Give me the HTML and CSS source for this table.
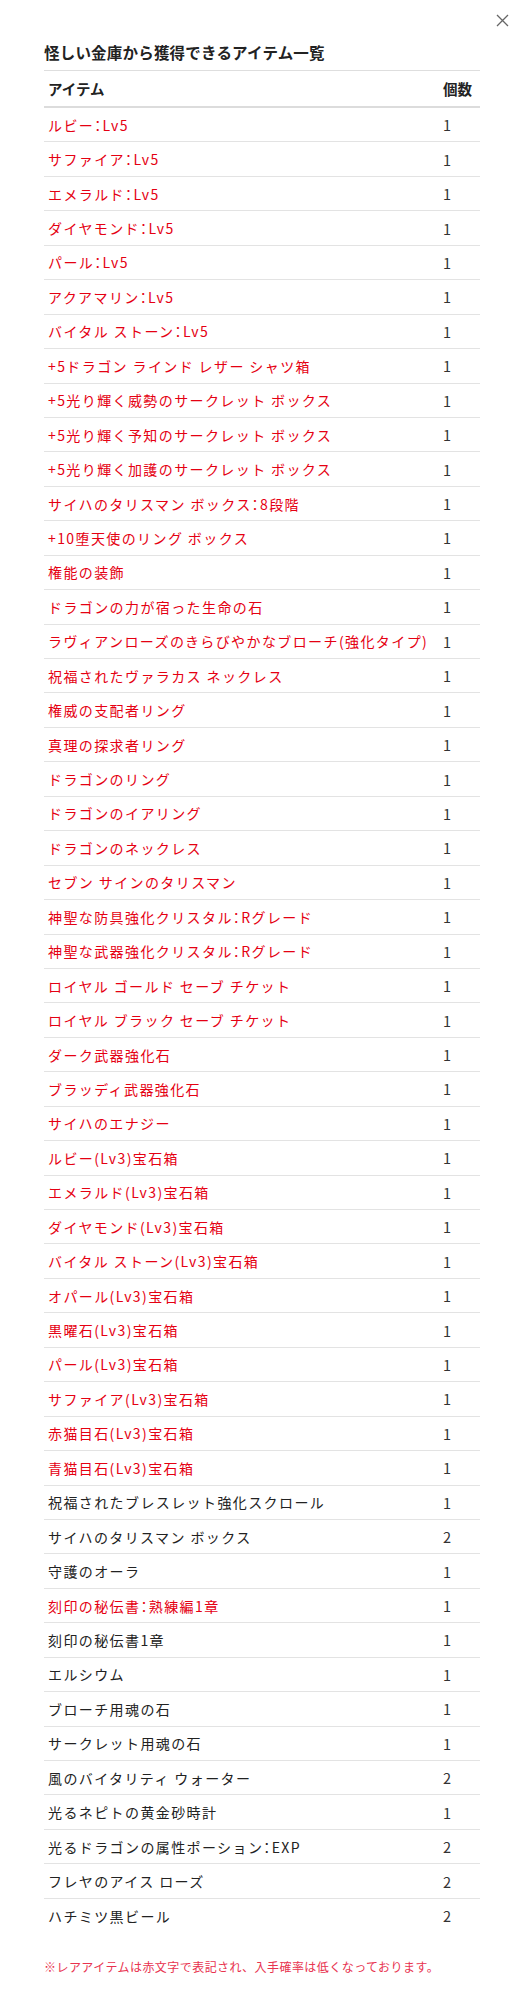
FILE: index.html
```html
<!DOCTYPE html>
<html lang="ja">
<head>
<meta charset="utf-8">
<title>怪しい金庫から獲得できるアイテム一覧</title>
<link rel="stylesheet" href="styles.css">
</head>
<body>
<div class="modal">
  <button class="close" aria-label="閉じる">
    <svg width="13" height="13" viewBox="0 0 13 13"><path d="M1 1L12 12M12 1L1 12" stroke="#666" stroke-width="1.3" fill="none"/></svg>
  </button>
  <h2 class="title">怪しい金庫から獲得できるアイテム一覧</h2>
  <div class="table">
    <div class="head"><span class="name">アイテム</span><span class="qty">個数</span></div>
    <div class="row rare"><span class="name">ルビー：Lv5</span><span class="qty">1</span></div>
    <div class="row rare"><span class="name">サファイア：Lv5</span><span class="qty">1</span></div>
    <div class="row rare"><span class="name">エメラルド：Lv5</span><span class="qty">1</span></div>
    <div class="row rare"><span class="name">ダイヤモンド：Lv5</span><span class="qty">1</span></div>
    <div class="row rare"><span class="name">パール：Lv5</span><span class="qty">1</span></div>
    <div class="row rare"><span class="name">アクアマリン：Lv5</span><span class="qty">1</span></div>
    <div class="row rare"><span class="name">バイタル ストーン：Lv5</span><span class="qty">1</span></div>
    <div class="row rare"><span class="name">+5ドラゴン ラインド レザー シャツ箱</span><span class="qty">1</span></div>
    <div class="row rare"><span class="name">+5光り輝く威勢のサークレット ボックス</span><span class="qty">1</span></div>
    <div class="row rare"><span class="name">+5光り輝く予知のサークレット ボックス</span><span class="qty">1</span></div>
    <div class="row rare"><span class="name">+5光り輝く加護のサークレット ボックス</span><span class="qty">1</span></div>
    <div class="row rare"><span class="name">サイハのタリスマン ボックス：8段階</span><span class="qty">1</span></div>
    <div class="row rare"><span class="name">+10堕天使のリング ボックス</span><span class="qty">1</span></div>
    <div class="row rare"><span class="name">権能の装飾</span><span class="qty">1</span></div>
    <div class="row rare"><span class="name">ドラゴンの力が宿った生命の石</span><span class="qty">1</span></div>
    <div class="row rare"><span class="name">ラヴィアンローズのきらびやかなブローチ(強化タイプ)</span><span class="qty">1</span></div>
    <div class="row rare"><span class="name">祝福されたヴァラカス ネックレス</span><span class="qty">1</span></div>
    <div class="row rare"><span class="name">権威の支配者リング</span><span class="qty">1</span></div>
    <div class="row rare"><span class="name">真理の探求者リング</span><span class="qty">1</span></div>
    <div class="row rare"><span class="name">ドラゴンのリング</span><span class="qty">1</span></div>
    <div class="row rare"><span class="name">ドラゴンのイアリング</span><span class="qty">1</span></div>
    <div class="row rare"><span class="name">ドラゴンのネックレス</span><span class="qty">1</span></div>
    <div class="row rare"><span class="name">セブン サインのタリスマン</span><span class="qty">1</span></div>
    <div class="row rare"><span class="name">神聖な防具強化クリスタル：Rグレード</span><span class="qty">1</span></div>
    <div class="row rare"><span class="name">神聖な武器強化クリスタル：Rグレード</span><span class="qty">1</span></div>
    <div class="row rare"><span class="name">ロイヤル ゴールド セーブ チケット</span><span class="qty">1</span></div>
    <div class="row rare"><span class="name">ロイヤル ブラック セーブ チケット</span><span class="qty">1</span></div>
    <div class="row rare"><span class="name">ダーク武器強化石</span><span class="qty">1</span></div>
    <div class="row rare"><span class="name">ブラッディ武器強化石</span><span class="qty">1</span></div>
    <div class="row rare"><span class="name">サイハのエナジー</span><span class="qty">1</span></div>
    <div class="row rare"><span class="name">ルビー(Lv3)宝石箱</span><span class="qty">1</span></div>
    <div class="row rare"><span class="name">エメラルド(Lv3)宝石箱</span><span class="qty">1</span></div>
    <div class="row rare"><span class="name">ダイヤモンド(Lv3)宝石箱</span><span class="qty">1</span></div>
    <div class="row rare"><span class="name">バイタル ストーン(Lv3)宝石箱</span><span class="qty">1</span></div>
    <div class="row rare"><span class="name">オパール(Lv3)宝石箱</span><span class="qty">1</span></div>
    <div class="row rare"><span class="name">黒曜石(Lv3)宝石箱</span><span class="qty">1</span></div>
    <div class="row rare"><span class="name">パール(Lv3)宝石箱</span><span class="qty">1</span></div>
    <div class="row rare"><span class="name">サファイア(Lv3)宝石箱</span><span class="qty">1</span></div>
    <div class="row rare"><span class="name">赤猫目石(Lv3)宝石箱</span><span class="qty">1</span></div>
    <div class="row rare"><span class="name">青猫目石(Lv3)宝石箱</span><span class="qty">1</span></div>
    <div class="row"><span class="name">祝福されたブレスレット強化スクロール</span><span class="qty">1</span></div>
    <div class="row"><span class="name">サイハのタリスマン ボックス</span><span class="qty">2</span></div>
    <div class="row"><span class="name">守護のオーラ</span><span class="qty">1</span></div>
    <div class="row rare"><span class="name">刻印の秘伝書：熟練編1章</span><span class="qty">1</span></div>
    <div class="row"><span class="name">刻印の秘伝書1章</span><span class="qty">1</span></div>
    <div class="row"><span class="name">エルシウム</span><span class="qty">1</span></div>
    <div class="row"><span class="name">ブローチ用魂の石</span><span class="qty">1</span></div>
    <div class="row"><span class="name">サークレット用魂の石</span><span class="qty">1</span></div>
    <div class="row"><span class="name">風のバイタリティ ウォーター</span><span class="qty">2</span></div>
    <div class="row"><span class="name">光るネピトの黄金砂時計</span><span class="qty">1</span></div>
    <div class="row"><span class="name">光るドラゴンの属性ポーション：EXP</span><span class="qty">2</span></div>
    <div class="row"><span class="name">フレヤのアイス ローズ</span><span class="qty">2</span></div>
    <div class="row"><span class="name">ハチミツ黒ビール</span><span class="qty">2</span></div>
  </div>
  <p class="note">※レアアイテムは赤文字で表記され、入手確率は低くなっております。</p>
</div>
</body>
</html>
```

FILE: styles.css
```css
html, body {
  margin: 0;
  padding: 0;
  background: #fff;
}

body {
  font-family: "Noto Sans CJK JP", "Noto Sans", sans-serif;
  color: #222;
}

.modal {
  position: relative;
  padding: 40px 48px 40px 44px;
}

.close {
  position: absolute;
  top: 14px;
  right: 19px;
  width: 13px;
  height: 13px;
  padding: 0;
  border: 0;
  background: none;
  display: block;
}

.close svg {
  display: block;
}

.title {
  margin: 0 0 6px;
  font-size: 15.5px;
  line-height: 24px;
  font-weight: 700;
  letter-spacing: 0.2px;
  color: #222;
}

.table {
  border-top: 1px solid #dedede;
}

.head,
.row {
  display: flex;
  align-items: center;
}

.head {
  height: 37px;
  border-bottom: 2px solid #dcdcdc;
  box-sizing: border-box;
  font-size: 14.5px;
  font-weight: 700;
  color: #222;
}

.row {
  height: 34.44px;
  box-sizing: border-box;
  border-bottom: 1px solid #e3e3e3;
  font-size: 14px;
  letter-spacing: 1.4px;
  color: #222;
}

.row:last-child {
  border-bottom: 0;
}

.row.rare .name {
  color: #e50012;
}

.name {
  flex: 1;
  padding-left: 4px;
  white-space: nowrap;
  font-feature-settings: "halt";
}

.qty {
  width: 37px;
  padding-left: 5px;
  flex: none;
}

.row .qty {
  font-size: 14.5px;
  letter-spacing: 0;
  color: #333;
}

.note {
  margin: 25px 0 0;
  font-size: 12px;
  line-height: 18px;
  letter-spacing: 0.45px;
  color: #e8334f;
}
```
